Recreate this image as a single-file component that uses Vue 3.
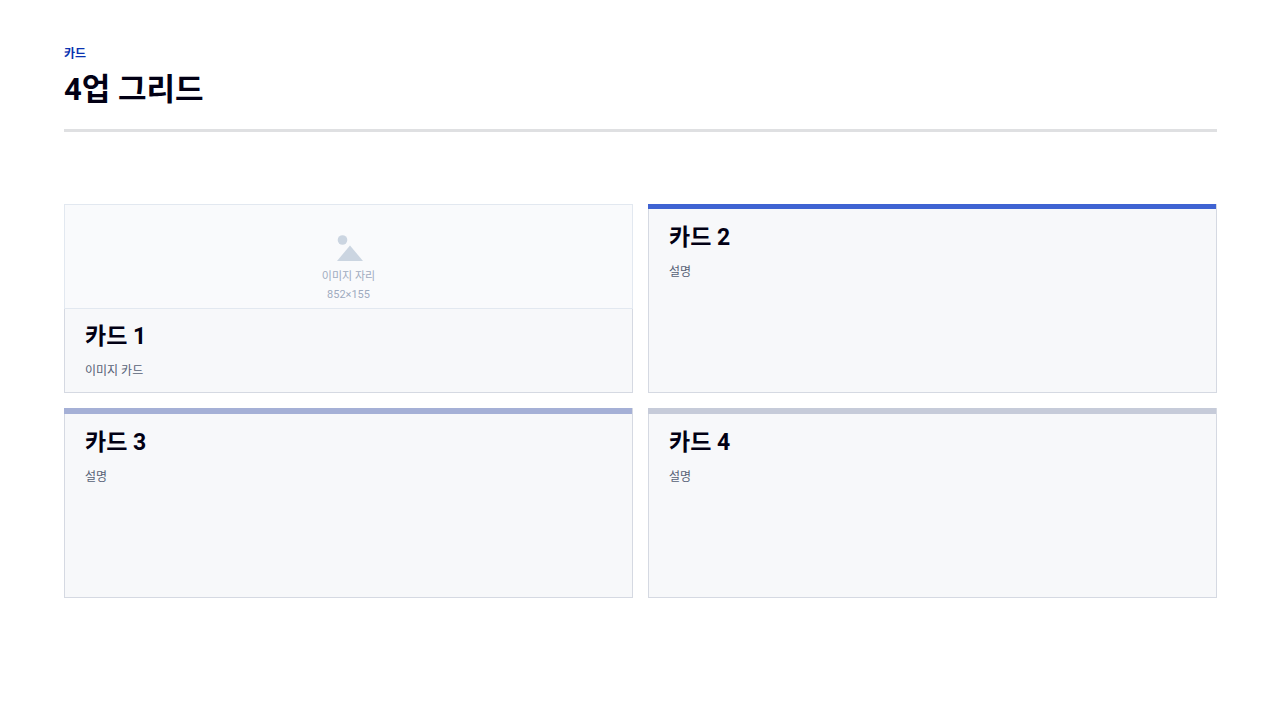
<script setup>
const cards = [
  { title: '카드 1', text: '이미지 카드', image: '852×155' },
  { title: '카드 2', text: '설명', tone: 'blue' },
  { title: '카드 3', text: '설명', tone: 'soft' },
  { title: '카드 4', text: '설명', tone: 'gray' },
]
</script>

<template>
  <main class="slide">
    <header class="head">
      <p class="eyebrow">카드</p>
      <h1>4업 그리드</h1>
    </header>
    <section class="grid">
      <article v-for="card in cards" :key="card.title" class="card" :class="{ accented: card.tone }">
        <div v-if="card.image" class="placeholder">
          <svg width="26" height="26" viewBox="0 0 26 26" aria-hidden="true">
            <circle cx="5.5" cy="5" r="4.8" />
            <path d="M0 26 13 10.5 26 26Z" />
          </svg>
          <span>이미지 자리</span>
          <span>{{ card.image }}</span>
        </div>
        <div v-else class="bar" :class="card.tone"></div>
        <div class="body">
          <h2>{{ card.title }}</h2>
          <p>{{ card.text }}</p>
        </div>
      </article>
    </section>
  </main>
</template>

<style>
body {
  background: #fff;
}
</style>

<style scoped>
.slide {
  box-sizing: border-box;
  min-height: 100vh;
  padding: 44px 63px 48px 64px;
  font-family: Roboto, "Noto Sans CJK KR", sans-serif;
  color: #020014;
}
h1, h2, p {
  margin: 0;
}
.head {
  padding-bottom: 19px;
  border-bottom: 3px solid #dfe0e2;
}
.eyebrow {
  font-size: 12px;
  line-height: 20px;
  font-weight: 700;
  color: #0a32b0;
}
h1 {
  margin-top: 6px;
  font-size: 31px;
  line-height: 40px;
  font-weight: 700;
}
.grid {
  display: grid;
  grid-template-columns: 1fr 1fr;
  grid-template-rows: minmax(189px, auto) minmax(190px, auto);
  gap: 15px;
  margin-top: 72px;
}
.card {
  border: 1px solid #d5d9e2;
  background: #f7f8fa;
}
.accented {
  border-top: 0;
}
.body {
  padding: 12px 20px 10px;
}
.bar {
  height: 6px;
  margin-left: -1px;
}
.blue {
  height: 5px;
  background: #3f63d2;
}
.soft { background: #a5b0d6; }
.gray { background: #c6cbd9; }
h2 {
  font-size: 23px;
  line-height: 32px;
  font-weight: 700;
}
.body p {
  margin-top: 8px;
  font-size: 12px;
  line-height: 20px;
  color: #566176;
}
.accented .body {
  padding-top: 13px;
}
.placeholder {
  box-sizing: border-box;
  height: 105px;
  margin: -1px -1px 0;
  padding-top: 30px;
  display: flex;
  flex-direction: column;
  align-items: center;
  border: 1px solid #e2e8f0;
  background: #f9fafc;
  color: #9fabbf;
  font-size: 11px;
  line-height: 18px;
}
.placeholder svg {
  margin: 0 0 7px 3px;
  fill: #cbd5e1;
}
</style>
